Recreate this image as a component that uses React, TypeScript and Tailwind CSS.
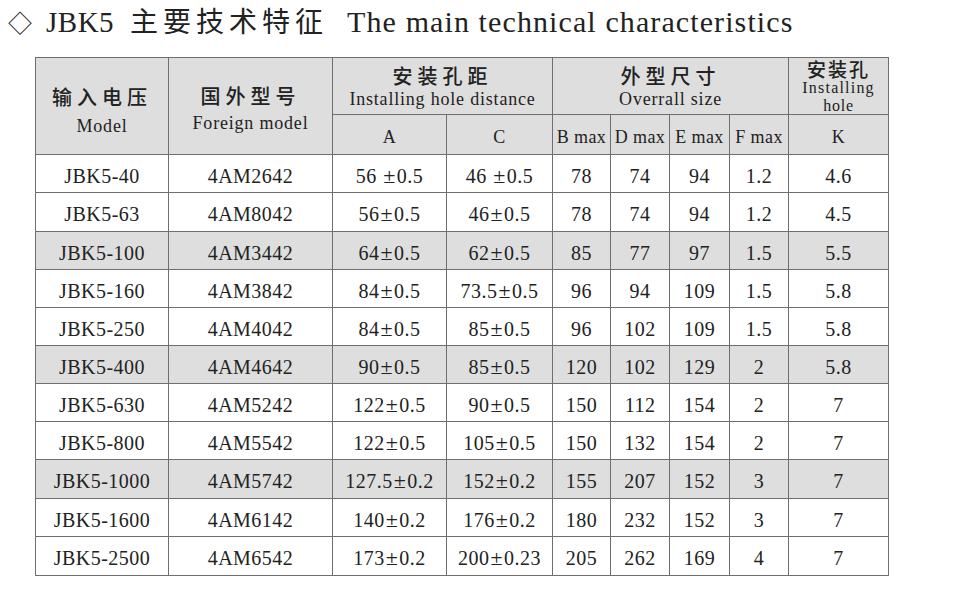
const rows: { m: string; f: string; a: string; c: string; b: string; d: string; e: string; fm: string; k: string; grey?: boolean; h: string }[] = [
  { m: 'JBK5-40', f: '4AM2642', a: '56 ±0.5', c: '46 ±0.5', b: '78', d: '74', e: '94', fm: '1.2', k: '4.6', h: 'h-[38px]' },
  { m: 'JBK5-63', f: '4AM8042', a: '56±0.5', c: '46±0.5', b: '78', d: '74', e: '94', fm: '1.2', k: '4.5', h: 'h-[39px]' },
  { m: 'JBK5-100', f: '4AM3442', a: '64±0.5', c: '62±0.5', b: '85', d: '77', e: '97', fm: '1.5', k: '5.5', grey: true, h: 'h-[38px]' },
  { m: 'JBK5-160', f: '4AM3842', a: '84±0.5', c: '73.5±0.5', b: '96', d: '94', e: '109', fm: '1.5', k: '5.8', h: 'h-[38px]' },
  { m: 'JBK5-250', f: '4AM4042', a: '84±0.5', c: '85±0.5', b: '96', d: '102', e: '109', fm: '1.5', k: '5.8', h: 'h-[38px]' },
  { m: 'JBK5-400', f: '4AM4642', a: '90±0.5', c: '85±0.5', b: '120', d: '102', e: '129', fm: '2', k: '5.8', grey: true, h: 'h-[38px]' },
  { m: 'JBK5-630', f: '4AM5242', a: '122±0.5', c: '90±0.5', b: '150', d: '112', e: '154', fm: '2', k: '7', h: 'h-[38px]' },
  { m: 'JBK5-800', f: '4AM5542', a: '122±0.5', c: '105±0.5', b: '150', d: '132', e: '154', fm: '2', k: '7', h: 'h-[38px]' },
  { m: 'JBK5-1000', f: '4AM5742', a: '127.5±0.2', c: '152±0.2', b: '155', d: '207', e: '152', fm: '3', k: '7', grey: true, h: 'h-[39px]' },
  { m: 'JBK5-1600', f: '4AM6142', a: '140±0.2', c: '176±0.2', b: '180', d: '232', e: '152', fm: '3', k: '7', h: 'h-[38px]' },
  { m: 'JBK5-2500', f: '4AM6542', a: '173±0.2', c: '200±0.23', b: '205', d: '262', e: '169', fm: '4', k: '7', h: 'h-[39px]' },
];

const cell = 'border border-[#6e6e6e] text-center align-middle p-0';
const cn = "font-['Noto_Sans_CJK_SC',sans-serif] font-medium text-[20px] leading-[24px] tracking-[5px]";
const en = 'text-[18px] leading-[20px] tracking-[0.8px]';

// the ± in the source is a wide glyph, give it a little room
function Val({ v }: { v: string }) {
  const parts = v.split('±');
  if (parts.length < 2) return <>{v}</>;
  return (
    <>
      {parts[0]}
      <span className="mx-[1px] text-[22px]">±</span>
      {parts[1]}
    </>
  );
}

export default function App() {
  return (
    <div className="w-[980px] h-[604px] bg-white text-[#222] font-['Liberation_Serif','Noto_Sans_CJK_SC',serif]">
      <div className="flex items-baseline pt-[2px] pl-[8px] h-[50px]">
        <span className="text-[24px] leading-[36px]">◇</span>
        <span className="ml-[14px] text-[29px] leading-[36px] tracking-[0.5px] font-['Liberation_Serif',serif]">JBK5</span>
        <span className="ml-[16px] text-[28px] leading-[36px] tracking-[5px] font-['Noto_Sans_CJK_SC',sans-serif]">主要技术特征</span>
        <span className="ml-[19px] text-[30px] leading-[36px] tracking-[1.1px] font-['Liberation_Serif',serif]">The main technical characteristics</span>
      </div>
      <table className="ml-[35px] mt-[7px] border-collapse table-fixed w-[853px] text-[20px] font-['Liberation_Serif',serif]">
        <colgroup>
          <col className="w-[133px]" />
          <col className="w-[164px]" />
          <col className="w-[114px]" />
          <col className="w-[106px]" />
          <col className="w-[58px]" />
          <col className="w-[59px]" />
          <col className="w-[60px]" />
          <col className="w-[59px]" />
          <col className="w-[100px]" />
        </colgroup>
        <thead className="bg-[#dedede]">
          <tr className="h-[57px]">
            <td rowSpan={2} className={cell}>
              <div className="pt-[8px]">
                <div className={cn}>输入电压</div>
                <div className={`${en} mt-[7px]`}>Model</div>
              </div>
            </td>
            <td rowSpan={2} className={cell}>
              <div className="pt-[4px]">
                <div className={cn}>国外型号</div>
                <div className={`${en} mt-[5px]`}>Foreign model</div>
              </div>
            </td>
            <td colSpan={2} className={cell}>
              <div className={cn}>安装孔距</div>
              <div className={`${en} mt-[1px]`}>Installing hole distance</div>
            </td>
            <td colSpan={4} className={cell}>
              <div className={cn}>外型尺寸</div>
              <div className={`${en} mt-[1px]`}>Overrall size</div>
            </td>
            <td className={cell}>
              <div className="font-['Noto_Sans_CJK_SC',sans-serif] font-medium text-[19px] leading-[21px] tracking-[2px]">安装孔</div>
              <div className="text-[16px] leading-[18px] tracking-[1.2px]">Installing</div>
              <div className="text-[16px] leading-[17px] tracking-[0.8px]">hole</div>
            </td>
          </tr>
          <tr className="h-[40px]">
            {['A', 'C', 'B max', 'D max', 'E max', 'F max', 'K'].map((t) => (
              <td key={t} className={`${cell} text-[18px] leading-[20px] tracking-[0.4px] pt-[5px] whitespace-nowrap`}>{t}</td>
            ))}
          </tr>
        </thead>
        <tbody>
          {rows.map((r) => (
            <tr key={r.m} className={`${r.h} ${r.grey ? 'bg-[#dedede]' : ''}`}>
              {[r.m, r.f, r.a, r.c, r.b, r.d, r.e, r.fm, r.k].map((v, i) => (
                <td key={i} className={`${cell} pt-[4px] leading-[24px] tracking-[0.5px] whitespace-nowrap`}>
                  <Val v={v} />
                </td>
              ))}
            </tr>
          ))}
        </tbody>
      </table>
    </div>
  );
}
